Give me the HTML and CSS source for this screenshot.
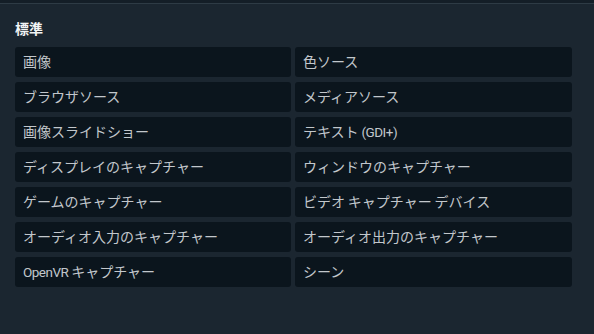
FILE: index.html
```html
<!DOCTYPE html>
<html lang="ja">
<head>
<meta charset="utf-8">
<link rel="stylesheet" href="styles.css">
</head>
<body>
<div class="topbar"></div>
<section class="panel">
  <h2 class="title">標準</h2>
  <div class="grid">
    <div class="item">画像</div>
    <div class="item">色ソース</div>
    <div class="item">ブラウザソース</div>
    <div class="item">メディアソース</div>
    <div class="item">画像スライドショー</div>
    <div class="item">テキスト<span class="latin"> (GDI+)</span></div>
    <div class="item">ディスプレイのキャプチャー</div>
    <div class="item">ウィンドウのキャプチャー</div>
    <div class="item">ゲームのキャプチャー</div>
    <div class="item">ビデオ<span class="latin"> </span>キャプチャー<span class="latin"> </span>デバイス</div>
    <div class="item">オーディオ入力のキャプチャー</div>
    <div class="item">オーディオ出力のキャプチャー</div>
    <div class="item"><span class="latin">OpenVR </span>キャプチャー</div>
    <div class="item">シーン</div>
  </div>
</section>
</body>
</html>
```
FILE: styles.css
```css
html, body {
  margin: 0;
  padding: 0;
}
body {
  width: 594px;
  height: 334px;
  overflow: hidden;
  background: #1b2630;
  font-family: "Roboto", "Noto Sans CJK JP", sans-serif;
}
.topbar {
  height: 3px;
  background: #141e27;
  border-bottom: 1px solid #2e3b45;
}
.panel {
  padding: 15px 22px 0 15px;
}
.title {
  margin: 0 0 8px 0;
  font-size: 14px;
  line-height: 20px;
  font-weight: 700;
  color: #f2f4f5;
}
.grid {
  display: grid;
  grid-template-columns: 276px 277px;
  column-gap: 4px;
  row-gap: 5px;
}
.item {
  height: 30px;
  line-height: 30px;
  padding-left: 8px;
  background: #0b151d;
  border-radius: 3px;
  font-size: 14px;
  color: #c2c7cc;
  white-space: nowrap;
}
.latin {
  font-size: 13.5px;
  letter-spacing: -0.5px;
}
```
